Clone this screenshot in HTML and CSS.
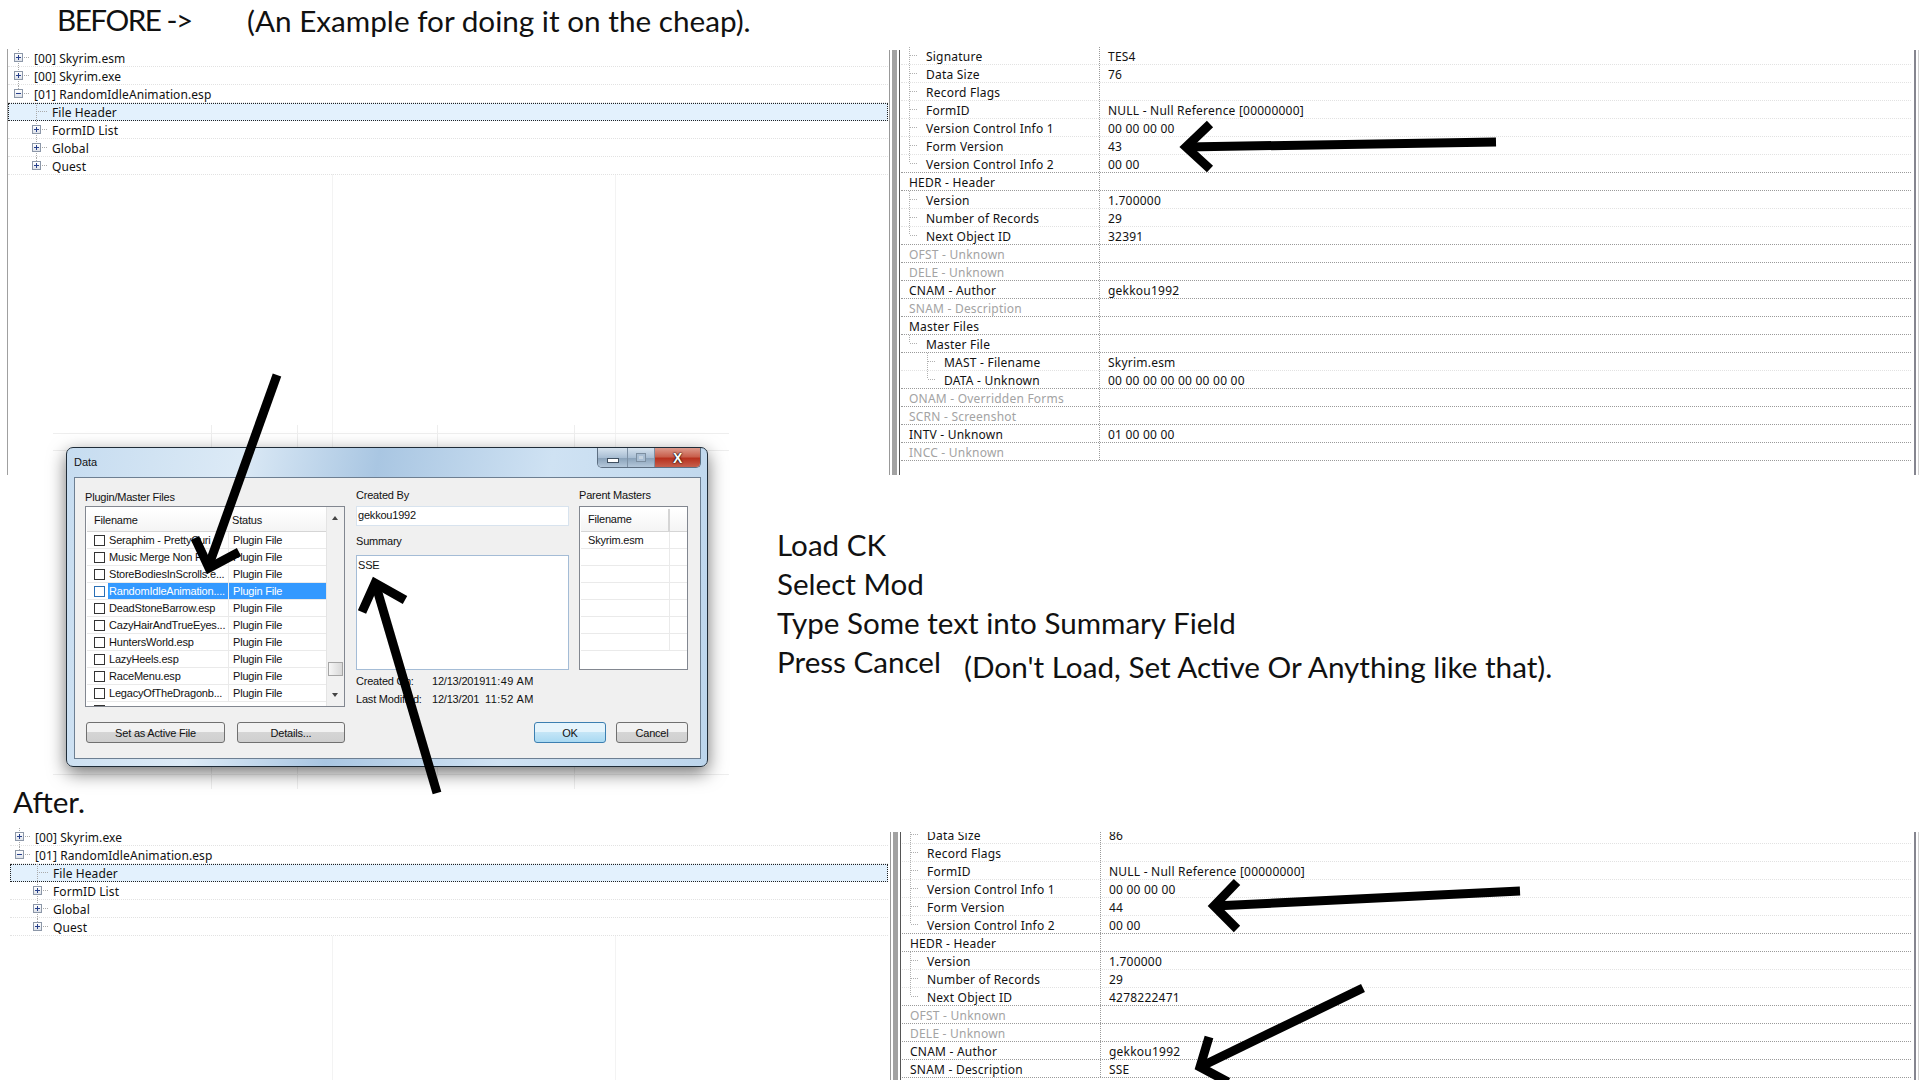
FILE: index.html
```html
<!DOCTYPE html>
<html lang="en">
<head>
    <meta charset="UTF-8">
    <title>Before and after</title>
    <link rel="stylesheet" href="styles.css">
</head>
<body>
    <p class="note heading before-label">BEFORE -&gt;</p>
    <p class="note heading before-sub">(An Example for doing it on the cheap).</p>

    <!-- before: record tree -->
    <div class="tree tree-before">
        <div class="tree-row"><span class="exp"></span><span class="stub"></span>[00] Skyrim.esm</div>
        <div class="tree-row"><span class="exp"></span><span class="stub"></span>[00] Skyrim.exe</div>
        <div class="tree-row tail"><span class="exp open"></span><span class="stub"></span>[01] RandomIdleAnimation.esp</div>
        <div class="tree-row sub selected"><span class="exp none"></span><span class="stub"></span>File Header</div>
        <div class="tree-row sub"><span class="exp"></span><span class="stub"></span>FormID List</div>
        <div class="tree-row sub"><span class="exp"></span><span class="stub"></span>Global</div>
        <div class="tree-row sub tail"><span class="exp"></span><span class="stub"></span>Quest</div>
    </div>

    <!-- before: record view -->
    <div class="props props-before">
        <div class="prop l1"><span class="name"><i></i>Signature</span><span class="val">TES4</span></div>
        <div class="prop l1"><span class="name"><i></i>Data Size</span><span class="val">76</span></div>
        <div class="prop l1"><span class="name"><i></i>Record Flags</span><span class="val"></span></div>
        <div class="prop l1"><span class="name"><i></i>FormID</span><span class="val">NULL - Null Reference [00000000]</span></div>
        <div class="prop l1"><span class="name"><i></i>Version Control Info 1</span><span class="val">00 00 00 00</span></div>
        <div class="prop l1"><span class="name"><i></i>Form Version</span><span class="val">43</span></div>
        <div class="prop l1 last"><span class="name"><i></i>Version Control Info 2</span><span class="val">00 00</span></div>
        <div class="prop"><span class="name">HEDR - Header</span><span class="val"></span></div>
        <div class="prop l1"><span class="name"><i></i>Version</span><span class="val">1.700000</span></div>
        <div class="prop l1"><span class="name"><i></i>Number of Records</span><span class="val">29</span></div>
        <div class="prop l1 last"><span class="name"><i></i>Next Object ID</span><span class="val">32391</span></div>
        <div class="prop off"><span class="name">OFST - Unknown</span><span class="val"></span></div>
        <div class="prop off"><span class="name">DELE - Unknown</span><span class="val"></span></div>
        <div class="prop"><span class="name">CNAM - Author</span><span class="val">gekkou1992</span></div>
        <div class="prop off"><span class="name">SNAM - Description</span><span class="val"></span></div>
        <div class="prop"><span class="name">Master Files</span><span class="val"></span></div>
        <div class="prop l1 last"><span class="name"><i></i>Master File</span><span class="val"></span></div>
        <div class="prop l2"><span class="name"><i></i>MAST - Filename</span><span class="val">Skyrim.esm</span></div>
        <div class="prop l2 last"><span class="name"><i></i>DATA - Unknown</span><span class="val">00 00 00 00 00 00 00 00</span></div>
        <div class="prop off"><span class="name">ONAM - Overridden Forms</span><span class="val"></span></div>
        <div class="prop off"><span class="name">SCRN - Screenshot</span><span class="val"></span></div>
        <div class="prop"><span class="name">INTV - Unknown</span><span class="val">01 00 00 00</span></div>
        <div class="prop off"><span class="name">INCC - Unknown</span><span class="val"></span></div>
    </div>

    <!-- sheet showing behind the dialog -->
    <div class="sheet"></div>

    <div class="dialog">
        <div class="titlebar">
            <span class="title">Data</span>
            <div class="winbtns">
                <span class="winbtn btn-min"><b class="min"></b></span>
                <span class="winbtn btn-max"><b class="max"></b></span>
                <span class="winbtn close">X</span>
            </div>
        </div>
        <div class="dialog-body">
            <div class="col-files">
                <label class="lbl lbl-files">Plugin/Master Files</label>
                <div class="listbox files">
                    <div class="list-main">
                        <div class="list-head"><span class="c1">Filename</span><span class="c2">Status</span></div>
                        <div class="list-row"><span class="check"></span><span class="c1">Seraphim - PrettyCuri</span><span class="c2">Plugin File</span></div>
                        <div class="list-row"><span class="check"></span><span class="c1">Music Merge Non P</span><span class="c2">Plugin File</span></div>
                        <div class="list-row"><span class="check"></span><span class="c1">StoreBodiesInScrolls.e...</span><span class="c2">Plugin File</span></div>
                        <div class="list-row active"><span class="check"></span><span class="c1">RandomIdleAnimation....</span><span class="c2">Plugin File</span></div>
                        <div class="list-row"><span class="check"></span><span class="c1">DeadStoneBarrow.esp</span><span class="c2">Plugin File</span></div>
                        <div class="list-row"><span class="check"></span><span class="c1">CazyHairAndTrueEyes...</span><span class="c2">Plugin File</span></div>
                        <div class="list-row"><span class="check"></span><span class="c1">HuntersWorld.esp</span><span class="c2">Plugin File</span></div>
                        <div class="list-row"><span class="check"></span><span class="c1">LazyHeels.esp</span><span class="c2">Plugin File</span></div>
                        <div class="list-row"><span class="check"></span><span class="c1">RaceMenu.esp</span><span class="c2">Plugin File</span></div>
                        <div class="list-row"><span class="check"></span><span class="c1">LegacyOfTheDragonb...</span><span class="c2">Plugin File</span></div>
                        <div class="list-row"><span class="check"></span></div>
                    </div>
                    <div class="scroll">
                        <span class="arrow up"></span>
                        <span class="thumb"></span>
                        <span class="arrow down"></span>
                    </div>
                </div>
                <div class="btnrow">
                    <button class="btn btn-active">Set as Active File</button>
                    <button class="btn btn-details">Details...</button>
                </div>
            </div>
            <div class="col-right">
                <div class="col-top">
                    <div class="col-summary">
                        <label class="lbl">Created By</label>
                        <div class="field author">gekkou1992</div>
                        <label class="lbl lbl-summary">Summary</label>
                        <div class="field summary">SSE</div>
                    </div>
                    <div class="col-masters">
                        <label class="lbl">Parent Masters</label>
                        <div class="listbox masters">
                            <div class="list-head"><span class="m1">Filename</span><span class="m2"></span></div>
                            <div class="list-row"><span class="m1">Skyrim.esm</span><span class="m2"></span></div>
                            <div class="list-row"><span class="m1"></span><span class="m2"></span></div>
                            <div class="list-row"><span class="m1"></span><span class="m2"></span></div>
                            <div class="list-row"><span class="m1"></span><span class="m2"></span></div>
                            <div class="list-row"><span class="m1"></span><span class="m2"></span></div>
                            <div class="list-row"><span class="m1"></span><span class="m2"></span></div>
                            <div class="list-row"><span class="m1"></span><span class="m2"></span></div>
                        </div>
                    </div>
                </div>
                <div class="stamp stamp-first"><span class="stamp-k">Created On:</span><span class="stamp-date">12/13/2019</span><span class="stamp-time">11:49 AM</span></div>
                <div class="stamp"><span class="stamp-k">Last Modified:</span><span class="stamp-date">12/13/201</span><span class="stamp-time">11:52 AM</span></div>
                <div class="btnrow end">
                    <button class="btn btn-ok">OK</button>
                    <button class="btn btn-cancel">Cancel</button>
                </div>
            </div>
        </div>
    </div>

    <div class="note steps">
        <p>Load CK</p>
        <p>Select Mod</p>
        <p>Type Some text into Summary Field</p>
        <p>Press Cancel</p>
    </div>
    <p class="note heading steps-sub">(Don't Load, Set Active Or Anything like that).</p>

    <p class="note heading after-label">After.</p>

    <!-- after: record tree -->
    <div class="tree tree-after">
        <div class="tree-row"><span class="exp"></span><span class="stub"></span>[00] Skyrim.exe</div>
        <div class="tree-row tail"><span class="exp open"></span><span class="stub"></span>[01] RandomIdleAnimation.esp</div>
        <div class="tree-row sub selected"><span class="exp none"></span><span class="stub"></span>File Header</div>
        <div class="tree-row sub"><span class="exp"></span><span class="stub"></span>FormID List</div>
        <div class="tree-row sub"><span class="exp"></span><span class="stub"></span>Global</div>
        <div class="tree-row sub tail"><span class="exp"></span><span class="stub"></span>Quest</div>
    </div>

    <!-- after: record view -->
    <div class="props props-after">
        <div class="prop l1"><span class="name"><i></i>Data Size</span><span class="val">86</span></div>
        <div class="prop l1"><span class="name"><i></i>Record Flags</span><span class="val"></span></div>
        <div class="prop l1"><span class="name"><i></i>FormID</span><span class="val">NULL - Null Reference [00000000]</span></div>
        <div class="prop l1"><span class="name"><i></i>Version Control Info 1</span><span class="val">00 00 00 00</span></div>
        <div class="prop l1"><span class="name"><i></i>Form Version</span><span class="val">44</span></div>
        <div class="prop l1 last"><span class="name"><i></i>Version Control Info 2</span><span class="val">00 00</span></div>
        <div class="prop"><span class="name">HEDR - Header</span><span class="val"></span></div>
        <div class="prop l1"><span class="name"><i></i>Version</span><span class="val">1.700000</span></div>
        <div class="prop l1"><span class="name"><i></i>Number of Records</span><span class="val">29</span></div>
        <div class="prop l1 last"><span class="name"><i></i>Next Object ID</span><span class="val">4278222471</span></div>
        <div class="prop off"><span class="name">OFST - Unknown</span><span class="val"></span></div>
        <div class="prop off"><span class="name">DELE - Unknown</span><span class="val"></span></div>
        <div class="prop"><span class="name">CNAM - Author</span><span class="val">gekkou1992</span></div>
        <div class="prop"><span class="name">SNAM - Description</span><span class="val">SSE</span></div>
    </div>

    <!-- hand drawn arrows on top of everything -->
    <svg class="arrows" width="1920" height="1080" viewBox="0 0 1920 1080">
        <g fill="none" stroke="#000" stroke-width="9">
            <path d="M1496 142 L1186 147"/>
            <path d="M1210 124 L1186 147 L1210 169"/>
            <path d="M1520 891 L1214 906"/>
            <path d="M1237 882 L1214 906 L1237 929"/>
            <path d="M1363 988 L1200 1067"/>
            <path d="M1209 1037 L1200 1067 L1228 1082"/>
            <path d="M277 375 L210 562"/>
            <path d="M195 538 L209 568 L239 552"/>
            <path d="M437 793 L376 586"/>
            <path d="M362 612 L375 583 L405 600"/>
        </g>
    </svg>
</body>
</html>
```

FILE: styles.css
```css
body {
    margin: 0;
    width: 1920px;
    height: 1080px;
    position: relative;
    overflow: hidden;
    background: #fff;
    font-family: "Noto Sans", Tahoma, sans-serif;
    font-size: 12px;
    color: #111;
}

/* captions typed over the pasted screenshots */
.note {
    position: absolute;
    margin: 0;
    font-family: Lato, sans-serif;
    color: #111;
    white-space: nowrap;
}

.heading {
    font-size: 29.7px;
    line-height: 40px;
}

.before-label { left: 57px; top: 0; letter-spacing: -1.5px; }
.before-sub { left: 247px; top: 1px; }
.after-label { left: 13px; top: 782px; }
.steps-sub { left: 964px; top: 647px; }

.steps {
    left: 777px;
    top: 525px;
    font-size: 29.6px;
    line-height: 39px;
}

.steps p {
    margin: 0;
}

/* record tree */
.tree {
    position: absolute;
    letter-spacing: 0.09px;
}

.tree-before {
    left: 7px;
    top: 49px;
    width: 880px;
    height: 426px;
    border-left: 1px solid #a0a0a0;
    background:
        linear-gradient(#f3f3f3, #f3f3f3) 324px 125px / 1px 301px no-repeat,
        linear-gradient(#f3f3f3, #f3f3f3) 607px 125px / 1px 301px no-repeat;
}

.tree-after {
    left: 10px;
    top: 828px;
    width: 878px;
    height: 252px;
    background:
        linear-gradient(#f3f3f3, #f3f3f3) 322px 108px / 1px 144px no-repeat,
        linear-gradient(#f3f3f3, #f3f3f3) 605px 108px / 1px 144px no-repeat;
}

.tree-row {
    height: 18px;
    box-sizing: border-box;
    display: flex;
    align-items: center;
    padding: 2px 0 0 6px;
    border-bottom: 1px dotted #e2e2e2;
    white-space: nowrap;
    position: relative;
}

/* dotted guide joining the nodes of one level */
.tree-row::before {
    content: "";
    position: absolute;
    left: 10px;
    top: 0;
    bottom: 0;
    border-left: 1px dotted #aaa;
}

.tree-row.tail::before {
    bottom: 9px;
}

.tree-row.sub {
    padding-left: 24px;
}

.tree-row.sub::before {
    left: 28px;
}

.tree-after .tree-row {
    padding-left: 5px;
}

.tree-after .tree-row.sub {
    padding-left: 23px;
}

.tree-after .tree-row::before {
    left: 9px;
}

.tree-after .tree-row.sub::before {
    left: 27px;
}

.tree-row.selected {
    background: #e3f1fd;
    outline: 1px dotted #222;
    outline-offset: -1px;
}

.exp {
    width: 7px;
    height: 7px;
    border: 1px solid #8c97a8;
    background: linear-gradient(#fff, #dfe3ea);
    position: relative;
    flex: none;
    margin-top: -2px;
}

.exp::before {
    content: "";
    position: absolute;
    left: 1px;
    right: 1px;
    top: 3px;
    height: 1px;
    background: #27408b;
}

.exp::after {
    content: "";
    position: absolute;
    top: 1px;
    bottom: 1px;
    left: 3px;
    width: 1px;
    background: #27408b;
}

.exp.open::after {
    display: none;
}

.exp.none {
    border-color: transparent;
    background: none;
}

.exp.none::before,
.exp.none::after {
    display: none;
}

.stub {
    width: 5px;
    margin: -2px 5px 0 1px;
    border-top: 1px dotted #aaa;
    flex: none;
}

.selected .stub {
    width: 9px;
    margin-left: -3px;
}

/* record view */
.props {
    position: absolute;
    right: 4px;
    box-sizing: border-box;
    overflow: hidden;
    border-left: 1px solid #999;
    border-right: 2px solid #85858f;
    box-shadow: 2px 0 0 #fff, 3px 0 0 #d0d0d0;
    padding: 0 3px 0 11px;
    letter-spacing: 0.22px;
}

/* splitter bar */
.props::before {
    content: "";
    position: absolute;
    left: 2px;
    top: 0;
    bottom: 0;
    width: 5px;
    background: #a2a2a2;
}

.props::after {
    content: "";
    position: absolute;
    left: 9px;
    top: 0;
    bottom: 0;
    width: 1px;
    background: #555;
}

.props-before {
    left: 889px;
    top: 50px;
    height: 425px;
    overflow: visible;
}

.props-before .prop:first-child {
    margin-top: -3px;
}

.props-after {
    left: 890px;
    top: 832px;
    height: 248px;
}

.props-after .prop:first-child {
    margin-top: -6px;
}

.prop {
    height: 18px;
    box-sizing: border-box;
    display: flex;
    border-bottom: 1px dotted #9a9a9a;
    white-space: nowrap;
    line-height: 13px;
}

.prop.l1,
.prop.l2 {
    border-bottom-color: #e2e2e2;
}

.prop.last {
    border-bottom-color: #9a9a9a;
}

.prop .name {
    width: 199px;
    box-sizing: border-box;
    padding: 2px 0 0 8px;
    border-right: 1px dotted #9a9a9a;
    display: flex;
    align-items: center;
    flex: none;
    position: relative;
}

.prop .val {
    padding: 2px 0 0 8px;
    display: flex;
    align-items: center;
}

.prop.l1 .name { padding-left: 25px; }
.prop.l2 .name { padding-left: 43px; }

.prop .name i {
    position: absolute;
    left: 8px;
    top: 0;
    bottom: 0;
    width: 8px;
    background: linear-gradient(#b0b0b0 50%, transparent 50%) 0 0 / 1px 2px repeat-y;
}

.prop.l2 .name i {
    left: 26px;
}

.prop .name i::after {
    content: "";
    position: absolute;
    left: 1px;
    top: 8px;
    width: 7px;
    border-top: 1px dotted #b0b0b0;
}

.prop.last .name i {
    bottom: 9px;
}

.off {
    color: #a3a3a3;
}

/* sheet lines showing round the dialog */
.sheet {
    position: absolute;
    left: 53px;
    top: 425px;
    width: 676px;
    height: 364px;
    background:
        linear-gradient(90deg, #eee 1px, transparent 1px) 158px 0 / 86px 100% no-repeat,
        linear-gradient(90deg, #eee 1px, transparent 1px) 244px 0 / 140px 100% no-repeat,
        linear-gradient(90deg, #eee 1px, transparent 1px) 384px 0 / 137px 100% no-repeat,
        linear-gradient(90deg, #eee 1px, transparent 1px) 521px 0 / 100px 100% no-repeat,
        linear-gradient(#eee 1px, transparent 1px) 0 8px / 100% 22px no-repeat,
        linear-gradient(#eee 1px, transparent 1px) 0 25px / 100% 22px no-repeat,
        linear-gradient(#eee 1px, transparent 1px) 0 349px / 100% 12px no-repeat;
}

/* dialog window */
.dialog {
    position: absolute;
    left: 66px;
    top: 447px;
    width: 642px;
    height: 320px;
    box-sizing: border-box;
    padding: 0 6px 7px 7px;
    border: 1px solid #1f2c38;
    border-radius: 7px;
    background: linear-gradient(100deg, #c6dcf0 0%, #dceaf6 25%, #a9c6e2 45%, #cfe2f3 70%, #bcd5ec 100%);
    box-shadow: 0 6px 18px rgba(0, 0, 0, 0.55);
    display: flex;
    flex-direction: column;
    font-family: "Liberation Sans", sans-serif;
    font-size: 11px;
    letter-spacing: -0.2px;
}

.titlebar {
    height: 29px;
    display: flex;
    justify-content: space-between;
    flex: none;
}

.title {
    margin-top: 8px;
    font-size: 11px;
    letter-spacing: 0;
}

.winbtns {
    display: flex;
    height: 19px;
    border: 1px solid #5d6f82;
    border-top: none;
    border-radius: 0 0 5px 5px;
    overflow: hidden;
}

.winbtn {
    background: linear-gradient(#d6e3ef, #a9bed3 50%, #8ba3ba 55%, #b4c7da);
    border-right: 1px solid #7e91a5;
    display: flex;
    align-items: center;
    justify-content: center;
}

.btn-min { width: 29px; }
.btn-max { width: 26px; }

.winbtn .min {
    width: 10px;
    height: 3px;
    margin-top: 6px;
    border: 1px solid #3f4f60;
    background: #fff;
}

.winbtn .max {
    width: 8px;
    height: 7px;
    border: 1px solid #7d8fa1;
    background: #c4d2df;
    box-shadow: inset 0 0 0 2px #a9bed3;
}

.winbtn.close {
    width: 45px;
    border-right: none;
    background: linear-gradient(#dd9a8c, #c9604d 45%, #b8321f 55%, #c7604d);
    color: #fff;
    font-weight: bold;
    font-size: 14px;
    text-shadow: 0 0 2px #000, 0 0 1px #000;
}

.dialog-body {
    flex: 1;
    display: flex;
    gap: 11px;
    padding: 0 12px 0 10px;
    background: #f0f0f0;
    border: 1px solid #6d7f92;
}

.col-files {
    width: 260px;
    flex: none;
    display: flex;
    flex-direction: column;
}

.lbl {
    display: block;
    height: 13px;
    line-height: 13px;
    margin-top: 11px;
}

.lbl-files {
    margin-top: 13px;
    margin-bottom: 2px;
}

.listbox {
    box-sizing: border-box;
    background: #fff;
    border: 1px solid #828790;
    margin-top: 4px;
}

.files {
    height: 201px;
    margin-top: 0;
    display: flex;
    overflow: hidden;
}

.list-main {
    flex: 1;
    min-width: 0;
    overflow: hidden;
    padding: 2px 0 0 1px;
}

.list-head {
    height: 23px;
    display: flex;
    align-items: center;
    background: linear-gradient(#fff, #f4f4f4);
    border-bottom: 1px solid #d5d5d5;
    box-sizing: border-box;
}

.list-row {
    height: 17px;
    box-sizing: border-box;
    display: flex;
    align-items: center;
    border-bottom: 1px solid #eaeaea;
    white-space: nowrap;
}

.files .list-head .c1 {
    padding-left: 7px;
    box-sizing: border-box;
    width: 141px;
}

.files .list-row .c1 {
    width: 121px;
    box-sizing: border-box;
    padding-left: 1px;
    height: 100%;
    line-height: 16px;
    border-right: 1px solid #eaeaea;
    overflow: hidden;
}

.c2 {
    padding-left: 4px;
    flex: 1;
    line-height: 16px;
}

.check {
    width: 9px;
    height: 9px;
    margin: 0 3px 0 7px;
    border: 1px solid #333;
    background: #fff;
    flex: none;
}

.active .c1,
.active .c2 {
    background: #3399ff;
    color: #fff;
    height: 100%;
}

.active .check {
    border-color: #2a6fb5;
}

.scroll {
    width: 17px;
    flex: none;
    background: #f1f1f1;
    position: relative;
    border-left: 1px solid #e4e4e4;
}

.arrow {
    position: absolute;
    left: 5px;
    border-left: 3px solid transparent;
    border-right: 3px solid transparent;
}

.arrow.up {
    top: 9px;
    border-bottom: 4px solid #444;
}

.arrow.down {
    bottom: 9px;
    border-top: 4px solid #444;
}

.thumb {
    position: absolute;
    left: 1px;
    right: 1px;
    top: 155px;
    height: 14px;
    background: linear-gradient(90deg, #f6f6f6, #d8d8d8);
    border: 1px solid #a5a5a5;
    box-sizing: border-box;
}

.btnrow {
    display: flex;
    justify-content: space-between;
    margin-top: 15px;
}

.btn {
    height: 21px;
    padding: 0;
    box-sizing: border-box;
    border: 1px solid #707070;
    border-radius: 3px;
    background: linear-gradient(#f2f2f2 45%, #d5d5d5 50%, #cfcfcf);
    font: inherit;
    letter-spacing: inherit;
    color: #111;
}

.btn-active { width: 139px; margin-left: 1px; }
.btn-details { width: 108px; }
.btn-ok {
    width: 72px;
    border-color: #3c7fb1;
    background: linear-gradient(#e5f4fc 45%, #c4e5f6 50%, #a9d9f2);
}
.btn-cancel { width: 72px; }

.col-right {
    flex: 1;
    display: flex;
    flex-direction: column;
}

.col-top {
    display: flex;
    gap: 10px;
}

.col-summary {
    width: 213px;
    flex: none;
}

.col-masters {
    width: 109px;
    flex: none;
}

.field {
    box-sizing: border-box;
    background: #fff;
    border: 1px solid #d8e3ee;
    padding: 0 1px;
}

.author {
    height: 20px;
    line-height: 17px;
    margin-top: 4px;
}

.lbl-summary {
    margin-top: 9px;
}

.summary {
    height: 115px;
    margin-top: 7px;
    padding-top: 1px;
    border-color: #a4bcd6;
    line-height: 16px;
}

.masters {
    height: 164px;
    padding: 2px 0 0 1px;
    overflow: hidden;
}

.m1 {
    width: 89px;
    box-sizing: border-box;
    padding-left: 7px;
    height: 100%;
    line-height: 16px;
    border-right: 1px solid #eaeaea;
    flex: none;
}

.list-head .m1 {
    line-height: 21px;
    border-right: 2px solid #d5d5d5;
}

.stamp {
    display: flex;
    height: 18px;
    line-height: 18px;
    white-space: nowrap;
}

.stamp-first {
    margin-top: 2px;
}

.stamp-k {
    width: 76px;
    flex: none;
}

.stamp-date {
    width: 53px;
    flex: none;
    overflow: hidden;
}

.stamp-time {
    letter-spacing: 0.4px;
}

.end {
    justify-content: flex-end;
    gap: 10px;
    margin-top: 14px;
}

/* arrows pasted on the composite */
.arrows {
    position: absolute;
    left: 0;
    top: 0;
}
```
